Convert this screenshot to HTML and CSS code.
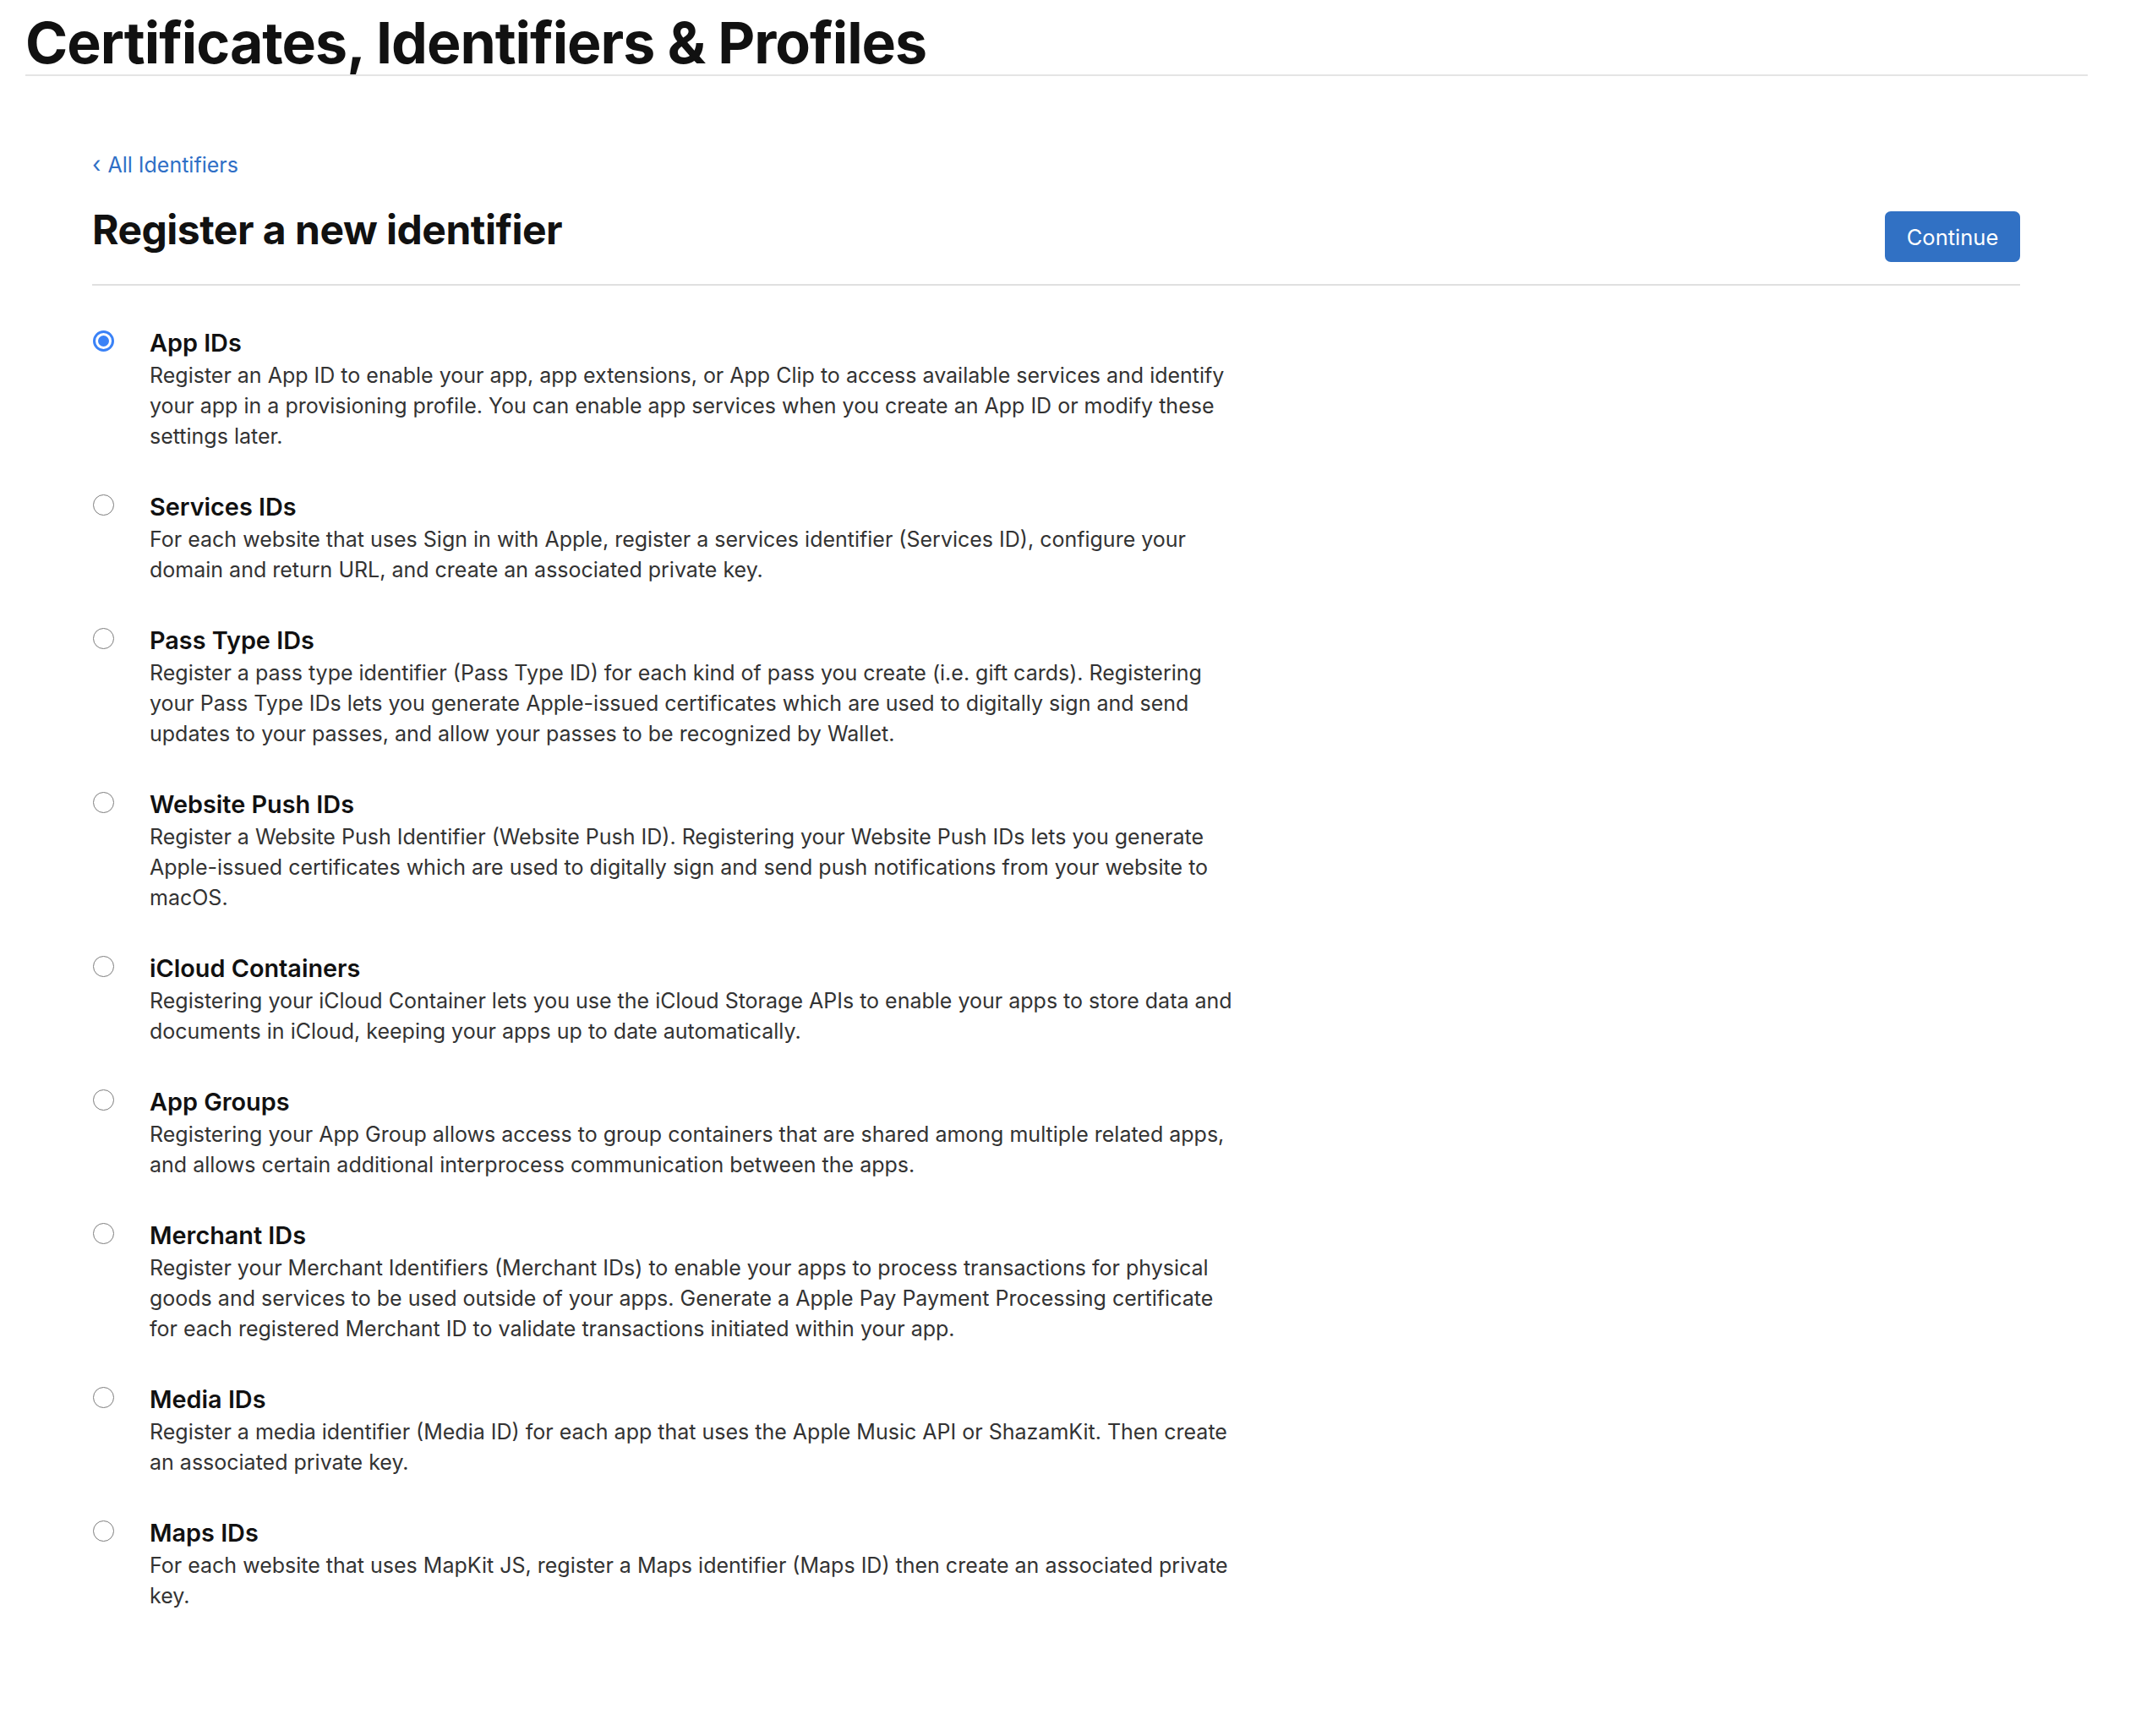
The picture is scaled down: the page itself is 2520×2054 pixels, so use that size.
FILE: index.html
```html
<!DOCTYPE html>
<html lang="en">
<head>
<meta charset="utf-8">
<title>Certificates, Identifiers &amp; Profiles</title>
<link rel="stylesheet" href="styles.css">
</head>
<body>
<header class="page-header">
  <h1 class="page-title">Certificates, Identifiers &amp; Profiles</h1>
</header>
<main class="content">
  <a class="back-link" href="#"><span class="chev">‹</span>All Identifiers</a>
  <div class="section-head">
    <h2 class="section-title">Register a new identifier</h2>
    <button class="btn-primary" type="button">Continue</button>
  </div>
  <ul class="id-list">
    <li class="id-item">
      <span class="radio checked"></span>
      <div class="id-text">
        <h3 class="id-name">App IDs</h3>
        <p class="id-desc">Register an App ID to enable your app, app extensions, or App Clip to access available services and identify your app in a provisioning profile. You can enable app services when you create an App ID or modify these settings later.</p>
      </div>
    </li>
    <li class="id-item">
      <span class="radio"></span>
      <div class="id-text">
        <h3 class="id-name">Services IDs</h3>
        <p class="id-desc">For each website that uses Sign in with Apple, register a services identifier (Services ID), configure your domain and return URL, and create an associated private key.</p>
      </div>
    </li>
    <li class="id-item">
      <span class="radio"></span>
      <div class="id-text">
        <h3 class="id-name">Pass Type IDs</h3>
        <p class="id-desc">Register a pass type identifier (Pass Type ID) for each kind of pass you create (i.e. gift cards). Registering your Pass Type IDs lets you generate Apple-issued certificates which are used to digitally sign and send updates to your passes, and allow your passes to be recognized by Wallet.</p>
      </div>
    </li>
    <li class="id-item">
      <span class="radio"></span>
      <div class="id-text">
        <h3 class="id-name">Website Push IDs</h3>
        <p class="id-desc">Register a Website Push Identifier (Website Push ID). Registering your Website Push IDs lets you generate Apple-issued certificates which are used to digitally sign and send push notifications from your website to macOS.</p>
      </div>
    </li>
    <li class="id-item">
      <span class="radio"></span>
      <div class="id-text">
        <h3 class="id-name">iCloud Containers</h3>
        <p class="id-desc">Registering your iCloud Container lets you use the iCloud Storage APIs to enable your apps to store data and documents in iCloud, keeping your apps up to date automatically.</p>
      </div>
    </li>
    <li class="id-item">
      <span class="radio"></span>
      <div class="id-text">
        <h3 class="id-name">App Groups</h3>
        <p class="id-desc">Registering your App Group allows access to group containers that are shared among multiple related apps, and allows certain additional interprocess communication between the apps.</p>
      </div>
    </li>
    <li class="id-item">
      <span class="radio"></span>
      <div class="id-text">
        <h3 class="id-name">Merchant IDs</h3>
        <p class="id-desc">Register your Merchant Identifiers (Merchant IDs) to enable your apps to process transactions for physical goods and services to be used outside of your apps. Generate a Apple Pay Payment Processing certificate for each registered Merchant ID to validate transactions initiated within your app.</p>
      </div>
    </li>
    <li class="id-item">
      <span class="radio"></span>
      <div class="id-text">
        <h3 class="id-name">Media IDs</h3>
        <p class="id-desc">Register a media identifier (Media ID) for each app that uses the Apple Music API or ShazamKit. Then create an associated private key.</p>
      </div>
    </li>
    <li class="id-item">
      <span class="radio"></span>
      <div class="id-text">
        <h3 class="id-name">Maps IDs</h3>
        <p class="id-desc">For each website that uses MapKit JS, register a Maps identifier (Maps ID) then create an associated private key.</p>
      </div>
    </li>
  </ul>
</main>
</body>
</html>
```

FILE: styles.css
```css
* { box-sizing: border-box; }

html, body {
  margin: 0;
  padding: 0;
  background: #ffffff;
}

body {
  font-family: Inter, "Noto Sans", "Liberation Sans", sans-serif;
  color: #1d1d1f;
}

.page-header {
  margin: 0 50px 0 30px;
  padding: 14px 0 2px;
  border-bottom: 2px solid #e4e4e4;
}

.page-title {
  margin: 0;
  font-size: 68px;
  line-height: 72px;
  font-weight: 700;
  letter-spacing: -1px;
  color: #111111;
}

.content {
  margin: 0 130px 0 109px;
  padding-top: 87px;
}

.back-link {
  display: inline-flex;
  align-items: center;
  font-size: 25px;
  line-height: 36px;
  color: #2f6fc6;
  text-decoration: none;
}

.chev {
  font-size: 27px;
  margin-right: 8px;
}

.section-head {
  display: flex;
  justify-content: space-between;
  align-items: flex-start;
  margin-top: 32px;
  padding-bottom: 26px;
  border-bottom: 2px solid #e0e0e0;
}

.section-title {
  margin: 0;
  font-size: 48px;
  line-height: 54px;
  font-weight: 700;
  letter-spacing: -0.5px;
  color: #111111;
}

.btn-primary {
  margin-top: 5px;
  width: 160px;
  height: 60px;
  border: none;
  border-radius: 7px;
  background: #3171c4;
  color: #ffffff;
  font-family: inherit;
  font-size: 25.5px;
  font-weight: 400;
  padding: 0;
}

.id-list {
  list-style: none;
  margin: 0;
  padding: 50px 0 0;
  display: flex;
  flex-direction: column;
  gap: 48px;
}

.id-item {
  display: flex;
  align-items: flex-start;
  gap: 42px;
}

.radio {
  flex: 0 0 auto;
  width: 25px;
  height: 25px;
  margin: 3px 0 0 1px;
  border-radius: 50%;
  border: 1.5px solid #7d7d7d;
  background: #ffffff;
  position: relative;
}

.radio.checked {
  border: 3px solid #3a82f7;
}

.radio.checked::after {
  content: "";
  position: absolute;
  left: 3px;
  top: 3px;
  width: 13px;
  height: 13px;
  border-radius: 50%;
  background: #3a82f7;
}

.id-text {
  max-width: 1290px;
}

.id-name {
  margin: 0 0 2px;
  font-size: 28.8px;
  line-height: 36px;
  font-weight: 600;
  color: #111111;
}

.id-desc {
  margin: 0;
  font-size: 25px;
  line-height: 36px;
  color: #333333;
}
```
